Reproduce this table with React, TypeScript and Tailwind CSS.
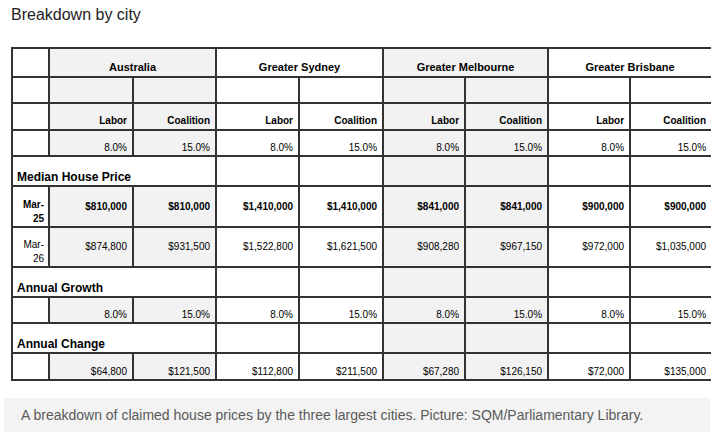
import type { ReactNode } from "react"

const widths = [37, 84, 83, 83, 84, 82, 83, 82, 81]
const shaded = [false, true, true, false, false, true, true, false, false]

const cities = ["Australia", "Greater Sydney", "Greater Melbourne", "Greater Brisbane"]
const rates = ["8.0%", "15.0%", "8.0%", "15.0%", "8.0%", "15.0%", "8.0%", "15.0%"]
const mar25 = ["$810,000", "$810,000", "$1,410,000", "$1,410,000", "$841,000", "$841,000", "$900,000", "$900,000"]
const mar26 = ["$874,800", "$931,500", "$1,522,800", "$1,621,500", "$908,280", "$967,150", "$972,000", "$1,035,000"]
const change = ["$64,800", "$121,500", "$112,800", "$211,500", "$67,280", "$126,150", "$72,000", "$135,000"]

function Cell({
  col,
  children,
  className = "",
  span = 1,
}: {
  col: number
  children?: ReactNode
  className?: string
  span?: number
}) {
  const bg = shaded[col] ? "bg-[#f2f2f2]" : "bg-white"
  const last = col + span - 1 === widths.length - 1
  return (
    <td
      colSpan={span}
      className={`border-2 border-[#333] px-[5px] ${last ? "border-r-0" : ""} ${bg} ${className}`}
    >
      {children}
    </td>
  )
}

function ValueRow({ values, h, className }: { values: string[]; h: string; className: string }) {
  return (
    <tr className={h}>
      <Cell col={0} />
      {values.map((v, i) => (
        <Cell key={i} col={i + 1} className={className}>
          {v}
        </Cell>
      ))}
    </tr>
  )
}

function LabelRow({ label }: { label: string }) {
  return (
    <tr className="h-[30px]">
      <Cell col={0} span={3} className="align-bottom !pl-[4px] pb-[2px] text-left text-[12px] font-bold">
        {label}
      </Cell>
      {[3, 4, 5, 6, 7, 8].map((c) => (
        <Cell key={c} col={c} />
      ))}
    </tr>
  )
}

function PriceRow({ label, values, bold }: { label: string; values: string[]; bold: boolean }) {
  const weight = bold ? "font-bold" : "font-normal"
  return (
    <tr className={bold ? "h-[41px]" : "h-[40px]"}>
      <Cell col={0} className={`align-bottom pb-0 pr-[4px] text-right leading-[14px] ${weight}`}>
        {label}
      </Cell>
      {values.map((v, i) => (
        <Cell key={i} col={i + 1} className={`align-middle text-right ${weight}`}>
          {v}
        </Cell>
      ))}
    </tr>
  )
}

export default function App() {
  return (
    <div className="min-h-screen bg-white font-['Liberation_Sans',Arial,sans-serif] text-black">
      <h2 className="pl-[11px] pt-[6px] text-[16px] leading-[18px] text-[#222]">Breakdown by city</h2>

      <div className="mt-[23px] ml-[11px] w-[699px]">
        <table className="table-fixed border-collapse text-[10px] leading-[12px]" style={{ width: 699 }}>
          <colgroup>
            {widths.map((w, i) => (
              <col key={i} style={{ width: w }} />
            ))}
          </colgroup>
          <tbody>
            <tr className="h-[29px]">
              <Cell col={0} />
              {cities.map((c, i) => (
                <Cell key={c} col={i * 2 + 1} span={2} className="align-bottom pb-[3px] text-center text-[11px] font-bold">
                  {c}
                </Cell>
              ))}
            </tr>
            <tr className="h-[26px]">
              {widths.map((_, i) => (
                <Cell key={i} col={i} />
              ))}
            </tr>
            <ValueRow
              h="h-[27px]"
              values={["Labor", "Coalition", "Labor", "Coalition", "Labor", "Coalition", "Labor", "Coalition"]}
              className="align-bottom pb-[2px] text-right font-bold"
            />
            <ValueRow h="h-[26px]" values={rates} className="align-bottom pb-[1px] text-right" />

            <LabelRow label="Median House Price" />
            <PriceRow label="Mar-25" values={mar25} bold />
            <PriceRow label="Mar-26" values={mar26} bold={false} />

            <LabelRow label="Annual Growth" />
            <ValueRow h="h-[26px]" values={rates} className="align-bottom pb-[1px] text-right" />

            <LabelRow label="Annual Change" />
            <ValueRow h="h-[27px]" values={change} className="align-bottom pb-[1px] text-right" />
          </tbody>
        </table>
      </div>

      <div className="mt-[17px] ml-[4px] flex h-[34px] w-[706px] items-center bg-[#f3f3f3] pl-[17px]">
        <p className="text-[14px] text-[#5a5a5a]">
          A breakdown of claimed house prices by the three largest cities. Picture: SQM/Parliamentary Library.
        </p>
      </div>
    </div>
  )
}
